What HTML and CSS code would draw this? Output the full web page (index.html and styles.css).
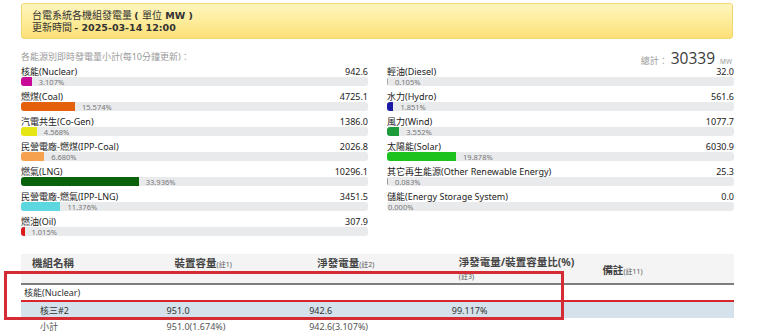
FILE: index.html
```html
<!DOCTYPE html>
<html lang="zh-Hant">
<head>
<meta charset="utf-8">
<title>台電系統各機組發電量</title>
<link rel="stylesheet" href="styles.css">
</head>
<body>
<div class="page">
  <div class="notice">
    <div class="notice-line">台電系統各機組發電量 <span class="en">( </span>單位<span class="en"> MW )</span></div>
    <div class="notice-line">更新時間 <span class="en">- 2025-03-14 12:00</span></div>
  </div>

  <div class="summary">
    <div class="col">
      <div class="col-head subtitle">各能源別即時發電量小計(每10分鐘更新)：</div>
      <div class="row">
        <div class="row-label"><span>核能(Nuclear)</span><span>942.6</span></div>
        <div class="track"><div class="bar c-nuclear" style="width:3.107%"></div><span class="pct">3.107%</span></div>
      </div>
      <div class="row">
        <div class="row-label"><span>燃煤(Coal)</span><span>4725.1</span></div>
        <div class="track"><div class="bar c-coal" style="width:15.574%"></div><span class="pct">15.574%</span></div>
      </div>
      <div class="row">
        <div class="row-label"><span>汽電共生(Co-Gen)</span><span>1386.0</span></div>
        <div class="track"><div class="bar c-cogen" style="width:4.568%"></div><span class="pct">4.568%</span></div>
      </div>
      <div class="row">
        <div class="row-label"><span>民營電廠-燃煤(IPP-Coal)</span><span>2026.8</span></div>
        <div class="track"><div class="bar c-ippcoal" style="width:6.680%"></div><span class="pct">6.680%</span></div>
      </div>
      <div class="row">
        <div class="row-label"><span>燃氣(LNG)</span><span>10296.1</span></div>
        <div class="track"><div class="bar c-lng" style="width:33.936%"></div><span class="pct">33.936%</span></div>
      </div>
      <div class="row">
        <div class="row-label"><span>民營電廠-燃氣(IPP-LNG)</span><span>3451.5</span></div>
        <div class="track"><div class="bar c-ipplng" style="width:11.376%"></div><span class="pct">11.376%</span></div>
      </div>
      <div class="row">
        <div class="row-label"><span>燃油(Oil)</span><span>307.9</span></div>
        <div class="track"><div class="bar c-oil" style="width:1.015%"></div><span class="pct">1.015%</span></div>
      </div>
    </div>

    <div class="col">
      <div class="col-head total"><span class="total-label">總計：</span><span class="total-num">30339</span><span class="total-unit">MW</span></div>
      <div class="row">
        <div class="row-label"><span>輕油(Diesel)</span><span>32.0</span></div>
        <div class="track"><div class="bar c-diesel" style="width:0.105%"></div><span class="pct">0.105%</span></div>
      </div>
      <div class="row">
        <div class="row-label"><span>水力(Hydro)</span><span>561.6</span></div>
        <div class="track"><div class="bar c-hydro" style="width:1.851%"></div><span class="pct">1.851%</span></div>
      </div>
      <div class="row">
        <div class="row-label"><span>風力(Wind)</span><span>1077.7</span></div>
        <div class="track"><div class="bar c-wind" style="width:3.552%"></div><span class="pct">3.552%</span></div>
      </div>
      <div class="row">
        <div class="row-label"><span>太陽能(Solar)</span><span>6030.9</span></div>
        <div class="track"><div class="bar c-solar" style="width:19.878%"></div><span class="pct">19.878%</span></div>
      </div>
      <div class="row">
        <div class="row-label"><span>其它再生能源(Other Renewable Energy)</span><span>25.3</span></div>
        <div class="track"><div class="bar c-other" style="width:0.083%"></div><span class="pct">0.083%</span></div>
      </div>
      <div class="row">
        <div class="row-label"><span>儲能(Energy Storage System)</span><span>0.0</span></div>
        <div class="track"><span class="pct pct-zero">0.000%</span></div>
      </div>
    </div>
  </div>

  <div class="units">
    <table class="unit-table">
      <thead>
        <tr>
          <th>機組名稱</th>
          <th>裝置容量<small>(註1)</small></th>
          <th>淨發電量<small>(註2)</small></th>
          <th class="th-two">淨發電量/裝置容量比(%)<br><small>(註3)</small></th>
          <th class="th-mid">備註<small>(註11)</small></th>
        </tr>
      </thead>
      <tbody>
        <tr class="group-row"><td colspan="5">核能(Nuclear)</td></tr>
        <tr class="unit-row">
          <td class="indent">核三#2</td>
          <td>951.0</td>
          <td>942.6</td>
          <td>99.117%</td>
          <td></td>
        </tr>
        <tr class="sub-row">
          <td class="indent">小計</td>
          <td>951.0(1.674%)</td>
          <td>942.6(3.107%)</td>
          <td></td>
          <td></td>
        </tr>
      </tbody>
    </table>
    <div class="highlight-box"></div>
  </div>
</div>
</body>
</html>
```

FILE: styles.css
```css
* { box-sizing: border-box; }

html, body {
  margin: 0;
  padding: 0;
  background: #ffffff;
}

body {
  font-family: "Noto Sans", "Noto Sans CJK TC", sans-serif;
  color: #333333;
  overflow: hidden;
}

.page {
  width: 780px;
  padding: 3px 0 0 21px;
}

.notice {
  width: 712px;
  height: 36px;
  padding: 5px 10px 0 10px;
  border: 1px solid #f3d670;
  border-radius: 3px;
  background: linear-gradient(to bottom, #fff6bd 0%, #fdeb98 55%, #fcdf78 100%);
  color: #333;
  font-family: "Noto Sans CJK TC", sans-serif;
  font-size: 10px;
}

.notice-line {
  height: 11.5px;
  line-height: 11.5px;
  white-space: nowrap;
}

.notice .en {
  font-family: "DejaVu Sans", sans-serif;
  font-weight: bold;
  font-size: 9.5px;
}

.summary {
  display: flex;
  gap: 19px;
  margin-top: 12px;
  width: 713px;
}

.col {
  width: 347px;
  display: flex;
  flex-direction: column;
}

.col-head {
  height: 14px;
  display: flex;
  align-items: flex-end;
  white-space: nowrap;
}

.subtitle {
  font-size: 9px;
  color: #9a9a9a;
  line-height: 12px;
  padding-bottom: 2px;
}

.total {
  justify-content: flex-end;
  align-items: baseline;
  color: #888;
  line-height: 14px;
}

.total-label {
  font-size: 9px;
  color: #999;
  margin-right: 3px;
}

.total-num {
  font-family: "Open Sans", sans-serif;
  font-size: 15.5px;
  color: #3a3a3a;
  line-height: 14px;
  margin-right: 5px;
}

.total-unit {
  font-size: 6.5px;
  color: #999;
  margin-right: 2px;
}

.row {
  height: 25px;
  padding-bottom: 4px;
}

.row-label {
  height: 12px;
  display: flex;
  justify-content: space-between;
  align-items: center;
  font-size: 9px;
  line-height: 12px;
  color: #222;
  white-space: nowrap;
  padding-top: 1px;
}

.track {
  height: 9px;
  background: #e9eaec;
  border-radius: 3px;
  overflow: hidden;
  display: flex;
  align-items: center;
}

.bar {
  height: 9px;
  min-width: 1px;
  flex: none;
}

.pct {
  font-size: 7.5px;
  line-height: 9px;
  color: #777;
  margin-left: 7px;
  padding-top: 2px;
  white-space: nowrap;
}

.pct-zero { margin-left: 1px; }

.c-nuclear { background: #c80a96; }
.c-coal { background: #e4600a; }
.c-cogen { background: #e6e614; }
.c-ippcoal { background: #f6a150; }
.c-lng { background: #0b620b; }
.c-ipplng { background: #5cd7df; }
.c-oil { background: #dc1c1c; }
.c-diesel { background: #aaaaaa; }
.c-hydro { background: #1a1aa4; }
.c-wind { background: #1d9a39; }
.c-solar { background: #1ec21e; }
.c-other { background: #999999; }

.units {
  position: relative;
  margin-top: 14px;
}

.unit-table {
  width: 713px;
  border-collapse: collapse;
  table-layout: fixed;
}

.unit-table th {
  background: #f4f4f4;
  text-align: left;
  vertical-align: top;
  font-size: 10.5px;
  font-weight: bold;
  color: #444;
  height: 29px;
  padding: 3px 10px 0 11px;
  line-height: 13px;
  border-bottom: 2px solid #7d7d7d;
  white-space: nowrap;
}

.unit-table th small {
  font-size: 7px;
  font-weight: normal;
  color: #555;
}

.unit-table th.th-two { padding-left: 10px; padding-top: 2px; }

.unit-table th.th-mid {
  vertical-align: middle;
  padding-top: 5px;
}

.unit-table td {
  font-size: 9px;
  color: #333;
  padding: 0 3px;
  white-space: nowrap;
}

.group-row td {
  height: 15px;
  line-height: 15px;
}

.unit-row td {
  height: 17px;
  background: #d5e2eb;
  border-top: 2px solid #d7252e;
}

.sub-row td {
  height: 16px;
  color: #555;
  padding-top: 1px;
}

.unit-table td.indent { padding-left: 19px; }

.highlight-box {
  position: absolute;
  left: -17px;
  top: 17px;
  width: 560px;
  height: 49px;
  border: 3px solid #d52b34;
  pointer-events: none;
}
```
